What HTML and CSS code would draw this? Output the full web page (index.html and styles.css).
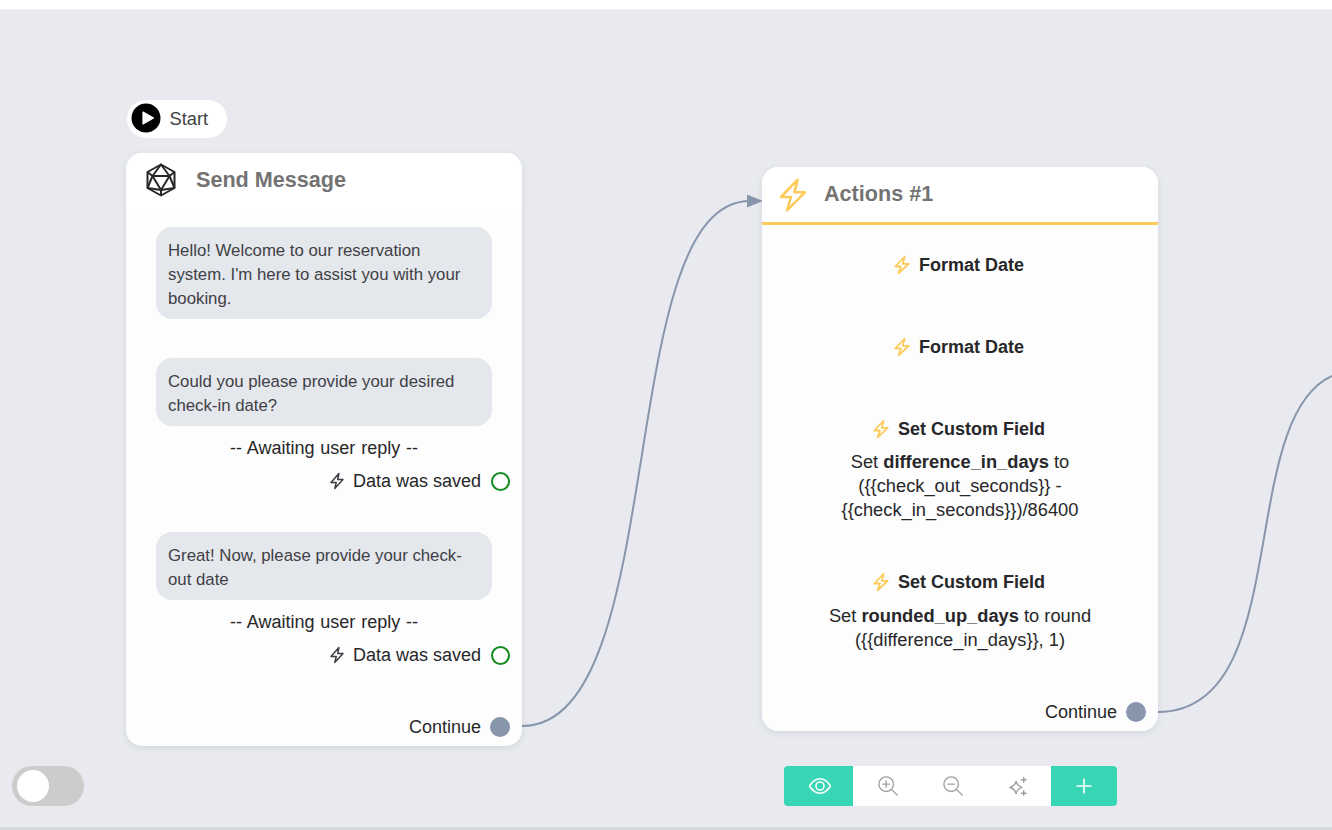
FILE: index.html
```html
<!DOCTYPE html>
<html lang="en">
<head>
<meta charset="utf-8">
<title>Flow builder</title>
<link rel="stylesheet" href="styles.css">
</head>
<body>
<div class="topbar"></div>
<main class="canvas">
  <svg class="edges" width="1332" height="830" viewBox="0 0 1332 830">
    <path class="edge" d="M522 726 C 672 726 612 201 750 201"/>
    <path class="arrow" d="M747 194.500 L763 201 L747 207.500 Z"/>
    <path class="edge" d="M1158 712 C 1295 712 1235 420 1332 376"/>
  </svg>

  <div class="start-pill">
    <span class="play"><svg width="30" height="30" viewBox="0 0 30 30"><circle cx="15" cy="15" r="14.500" fill="#000"/><path d="M12 9 L22.500 15 L12 21 Z" fill="#fff" stroke="#fff" stroke-width="1.200" stroke-linejoin="round"/></svg></span>
    <span>Start</span>
  </div>

  <section class="node node-message">
    <header class="node-head">
      <svg class="head-icon" width="32" height="34" viewBox="0 0 32 34" fill="none" stroke="#27272a" stroke-width="2" stroke-linejoin="round"><path d="M16 1.500 L29.500 9 V25 L16 32.500 L2.500 25 V9 Z"/><path d="M16 1.500 L24.500 13 H7.500 Z"/><path d="M7.500 13 L16 27 L24.500 13"/><path d="M2.500 9 L7.500 13 M29.500 9 L24.500 13 M2.500 25 L7.500 13 M29.500 25 L24.500 13 M2.500 25 L16 27 L29.500 25 M16 27 V32.500"/></svg>
      <h2>Send Message</h2>
    </header>
    <div class="message-body">
      <p class="bubble">Hello! Welcome to our reservation system. I'm here to assist you with your booking.</p>
      <p class="bubble second">Could you please provide your desired check-in date?</p>
      <p class="await">-- Awaiting user reply --</p>
      <div class="saved">
        <svg class="bolt-dark" width="18" height="20" viewBox="0 0 24 24" fill="none" stroke="#3f3f46" stroke-width="2" stroke-linejoin="round" stroke-linecap="round"><path d="M14.500 2 L4 14 H11 L9 22 L20 10 H13 Z"/></svg>
        <span>Data was saved</span>
        <span class="ring"></span>
      </div>
      <p class="bubble third">Great! Now, please provide your check-out date</p>
      <p class="await">-- Awaiting user reply --</p>
      <div class="saved">
        <svg class="bolt-dark" width="18" height="20" viewBox="0 0 24 24" fill="none" stroke="#3f3f46" stroke-width="2" stroke-linejoin="round" stroke-linecap="round"><path d="M14.500 2 L4 14 H11 L9 22 L20 10 H13 Z"/></svg>
        <span>Data was saved</span>
        <span class="ring"></span>
      </div>
    </div>
    <div class="continue"><span>Continue</span><span class="port"></span></div>
  </section>

  <section class="node node-actions">
    <header class="node-head actions-head">
      <svg class="head-bolt" width="32" height="36" viewBox="0 0 24 27" fill="none" stroke="#fdcb5c" stroke-width="1.900" stroke-linejoin="round" stroke-linecap="round"><path d="M15.500 2 L3 15 H10.500 L7.500 25 L21 11.500 H13 Z"/></svg>
      <h2>Actions #1</h2>
    </header>
    <div class="actions-body">
      <div class="action">
        <h3><svg width="18" height="20" viewBox="0 0 24 26" fill="none" stroke="#fdcb5c" stroke-width="2.400" stroke-linejoin="round" stroke-linecap="round"><path d="M15.500 2 L3 15 H10.500 L7.500 24 L21 11.500 H13 Z"/></svg>Format Date</h3>
      </div>
      <div class="action">
        <h3><svg width="18" height="20" viewBox="0 0 24 26" fill="none" stroke="#fdcb5c" stroke-width="2.400" stroke-linejoin="round" stroke-linecap="round"><path d="M15.500 2 L3 15 H10.500 L7.500 24 L21 11.500 H13 Z"/></svg>Format Date</h3>
      </div>
      <div class="action">
        <h3><svg width="18" height="20" viewBox="0 0 24 26" fill="none" stroke="#fdcb5c" stroke-width="2.400" stroke-linejoin="round" stroke-linecap="round"><path d="M15.500 2 L3 15 H10.500 L7.500 24 L21 11.500 H13 Z"/></svg>Set Custom Field</h3>
        <p>Set <b>difference_in_days</b> to<br>({{check_out_seconds}} -<br>{{check_in_seconds}})/86400</p>
      </div>
      <div class="action">
        <h3><svg width="18" height="20" viewBox="0 0 24 26" fill="none" stroke="#fdcb5c" stroke-width="2.400" stroke-linejoin="round" stroke-linecap="round"><path d="M15.500 2 L3 15 H10.500 L7.500 24 L21 11.500 H13 Z"/></svg>Set Custom Field</h3>
        <p>Set <b>rounded_up_days</b> to round<br>({{difference_in_days}}, 1)</p>
      </div>
    </div>
    <div class="continue"><span>Continue</span><span class="port"></span></div>
  </section>

  <div class="toggle"><span class="knob"></span></div>

  <nav class="toolbar">
    <button class="tool tool-eye" aria-label="Preview"><svg width="24" height="18" viewBox="0 0 24 18" fill="none" stroke="#fff" stroke-width="1.600"><path d="M1.500 9 C5 3.500 8.500 1.800 12 1.800 C15.500 1.800 19 3.500 22.500 9 C19 14.500 15.500 16.200 12 16.200 C8.500 16.200 5 14.500 1.500 9 Z"/><circle cx="12" cy="9" r="4"/></svg></button>
    <div class="tools-mid">
      <button class="tool tool-nudge" aria-label="Zoom in"><svg width="20" height="20" viewBox="0 0 22 22" fill="none" stroke="#a0a0a4" stroke-width="1.500" stroke-linecap="round"><circle cx="9" cy="9" r="8"/><path d="M15 15 L21 21 M9 5.500 V12.500 M5.500 9 H12.500"/></svg></button>
      <button class="tool" aria-label="Zoom out"><svg width="20" height="20" viewBox="0 0 22 22" fill="none" stroke="#a0a0a4" stroke-width="1.500" stroke-linecap="round"><circle cx="9" cy="9" r="8"/><path d="M15 15 L21 21 M5.500 9 H12.500"/></svg></button>
      <button class="tool" aria-label="Auto arrange"><svg width="21" height="21" viewBox="0 0 22 22" fill="none" stroke="#a0a0a4" stroke-width="1.500" stroke-linejoin="round" stroke-linecap="round"><path d="M8.500 5.500 C9.300 9 10.500 10.500 14.500 12 C10.500 13.500 9.300 15 8.500 18.500 C7.700 15 6.500 13.500 2 12 C6.500 10.500 7.700 9 8.500 5.500 Z"/><path d="M16.500 1.500 V6.500 M14 4 H19 M16.500 15.500 V20.500 M14 18 H19"/></svg></button>
    </div>
    <button class="tool tool-add" aria-label="Add"><svg width="18" height="18" viewBox="0 0 18 18" fill="none" stroke="#fff" stroke-width="1.600"><path d="M1.500 9 H16.500 M9 1.500 V16.500"/></svg></button>
  </nav>
</main>
<div class="bottombar"></div>
</body>
</html>
```
FILE: styles.css
```css
* { box-sizing: border-box; }
html, body { margin: 0; height: 100%; overflow: hidden; }
body {
  display: flex;
  flex-direction: column;
  width: 1332px;
  height: 830px;
  background: #fff;
  font-family: "Liberation Sans", Arial, sans-serif;
  font-size: 16px;
  line-height: 24px;
  color: #27272a;
}
.topbar { flex: none; height: 10px; background: #fff; border-bottom: 1px solid #f0f1f4; }
.canvas { position: relative; flex: 1; background: #e8eaef; overflow: hidden; }
.bottombar { height: 3px; flex: none; background: #d6dadd; }

.edges { position: absolute; left: 0; top: -10px; }
.edge { fill: none; stroke: #8796ab; stroke-width: 2; }
.arrow { fill: #8796ab; }

.start-pill {
  position: absolute;
  left: 127px;
  top: 90px;
  width: 100px;
  height: 38px;
  display: flex;
  align-items: center;
  gap: 9px;
  padding-left: 3.500px;
  background: #fff;
  border-radius: 19px;
  font-size: 18.300px;
  color: #3f3f46;
}
.play { display: flex; margin-bottom: 2px; }

.node {
  position: absolute;
  width: 396px;
  background: #fdfdfd;
  border-radius: 16px;
  box-shadow: 0 2px 6px rgba(100, 110, 130, .16);
  display: flex;
  flex-direction: column;
}
.node-message { left: 126px; top: 143px; height: 593px; }
.node-actions { left: 762px; top: 157px; height: 564px; }

.node-head {
  display: flex;
  align-items: center;
  height: 55px;
  padding-left: 19px;
  background: #fff;
  border-radius: 16px 16px 0 0;
  flex: none;
}
.node-head h2 { margin: 0 0 2px; font-size: 21.600px; font-weight: 700; color: #737373; }
.head-icon { margin: 0 19px 2px 0; }
.actions-head { height: 58px; padding-left: 15px; border-bottom: 3px solid #fdcb5c; }
.head-bolt { margin-right: 15px; }

.message-body { padding: 19px 30px 0; flex: 1; }
.bubble {
  margin: 0;
  padding: 12px 12px 8px;
  background: #e4e7ec;
  border-radius: 16px;
  font-size: 16.800px;
  color: #3f3f46;
}
.bubble.second { margin-top: 39px; }
.bubble.third { margin-top: 39px; }
.await { margin: 10px 0 0; text-align: center; height: 24px; font-size: 18px; word-spacing: 0.800px; }
.saved {
  display: flex;
  align-items: center;
  justify-content: flex-end;
  margin: 9px -18px 0 0;
  height: 24px;
  color: #27272a;
  font-size: 18px;
}
.bolt-dark { margin-right: 7px; }
.ring {
  width: 19px;
  height: 19px;
  margin-left: 10px;
  border: 2px solid #138a1d;
  border-radius: 50%;
  background: #fff;
}

.continue {
  display: flex;
  align-items: center;
  justify-content: flex-end;
  gap: 9px;
  height: 24px;
  margin: 0 12px 7px 0;
  flex: none;
  font-size: 18px;
}
.port { width: 20px; height: 20px; border-radius: 50%; background: #8796ab; }

.actions-body { flex: 1; padding-top: 28px; text-align: center; min-height: 0; }
.action { margin-bottom: 58px; }
.action:nth-child(3) { margin-bottom: 48px; }
.action:nth-child(4) p { margin-top: 10px; }
.action h3 {
  display: flex;
  align-items: center;
  justify-content: center;
  gap: 8px;
  margin: 0;
  padding-right: 3px;
  height: 24px;
  font-size: 18px;
  font-weight: 700;
  color: #27272a;
}
.action p { margin: 9px 0 0; padding: 0 40px; font-size: 18.300px; color: #27272a; }

.toggle {
  position: absolute;
  left: 12px;
  top: 756px;
  width: 72px;
  height: 40px;
  padding: 4px 5px;
  background: #ccc;
  border-radius: 20px;
}
.knob { display: block; width: 32px; height: 32px; background: #fff; border-radius: 50%; }

.toolbar {
  position: absolute;
  left: 784px;
  top: 756px;
  width: 333px;
  height: 40px;
  display: flex;
  background: #fff;
  border-radius: 4px;
  overflow: hidden;
}
.tool {
  display: flex;
  align-items: center;
  justify-content: center;
  padding: 0;
  border: 0;
  background: none;
  flex: 1;
}
.tool-eye { flex: none; width: 69px; background: #38d6b4; padding-left: 2px; }
.tool-add { flex: none; width: 66px; background: #38d6b4; }
.tool-nudge { padding-left: 2px; }
.tools-mid { flex: 1; display: flex; }
```
